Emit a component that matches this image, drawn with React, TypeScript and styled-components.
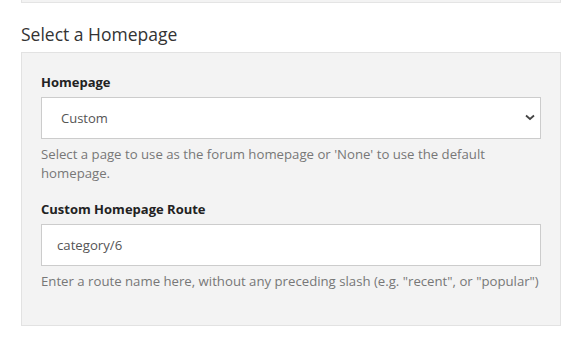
import styled, {createGlobalStyle} from "styled-components";

const GlobalStyle = createGlobalStyle`
  body {
    margin: 0;
    background: #ffffff;
    font-family: "Open Sans", "Noto Sans", "Liberation Sans", sans-serif;
  }
`;

const Page = styled.div`
  width: 540px;
  padding: 0 9px 0 21px;
`;

const PrevPanel = styled.div`
  height: 2px;
  border: 1px solid #e4e4e4;
  border-top: none;
  background: #f3f3f3;
`;

const Heading = styled.h3`
  margin: 19px 0 0 0;
  font-size: 17.5px;
  line-height: 24px;
  font-weight: 400;
  color: #333;
`;

const Panel = styled.div`
  margin-top: 6px;
  background: #f3f3f3;
  border: 1px solid #e2e2e2;
  padding: 20px 19px 34px 19px;
`;

const Group = styled.div`
  & + & {
    margin-top: 17px;
  }
`;

const Label = styled.label`
  display: block;
  font-size: 13px;
  line-height: 18px;
  font-weight: 700;
  color: #222;
  margin-bottom: 6px;
`;

const SelectWrap = styled.div`
  position: relative;
`;

const Select = styled.select`
  appearance: none;
  width: 100%;
  height: 42px;
  box-sizing: border-box;
  border: 1px solid #cccccc;
  border-radius: 0;
  background: #ffffff;
  padding: 0 30px 0 19px;
  font-family: inherit;
  font-size: 13px;
  color: #555;
  outline: none;
`;

const Chevron = styled.svg`
  position: absolute;
  right: 6px;
  top: 16px;
  pointer-events: none;
`;

const Input = styled.input`
  width: 100%;
  height: 42px;
  box-sizing: border-box;
  border: 1px solid #cccccc;
  border-radius: 0;
  background: #ffffff;
  padding: 0 15px;
  font-family: inherit;
  font-size: 13.2px;
  color: #555;
  outline: none;
`;

const Help = styled.p`
  margin: 6px 0 0 0;
  font-size: 13.2px;
  line-height: 19px;
  color: #777;
`;

export default function App() {
  return (
    <>
      <GlobalStyle />
      <Page>
        <PrevPanel />
        <Heading>Select a Homepage</Heading>
        <Panel>
          <Group>
            <Label>Homepage</Label>
            <SelectWrap>
              <Select defaultValue="custom">
                <option value="none">None</option>
                <option value="custom">Custom</option>
              </Select>
              <Chevron width="10" height="8" viewBox="0 0 10 8">
                <path d="M1 2.5 L5 6 L9 2.5" fill="none" stroke="#444" strokeWidth="1.8" />
              </Chevron>
            </SelectWrap>
            <Help>
              Select a page to use as the forum homepage or 'None' to use the default homepage.
            </Help>
          </Group>
          <Group>
            <Label>Custom Homepage Route</Label>
            <Input defaultValue="category/6" />
            <Help>
              Enter a route name here, without any preceding slash (e.g. "recent", or "popular")
            </Help>
          </Group>
        </Panel>
      </Page>
    </>
  );
}
